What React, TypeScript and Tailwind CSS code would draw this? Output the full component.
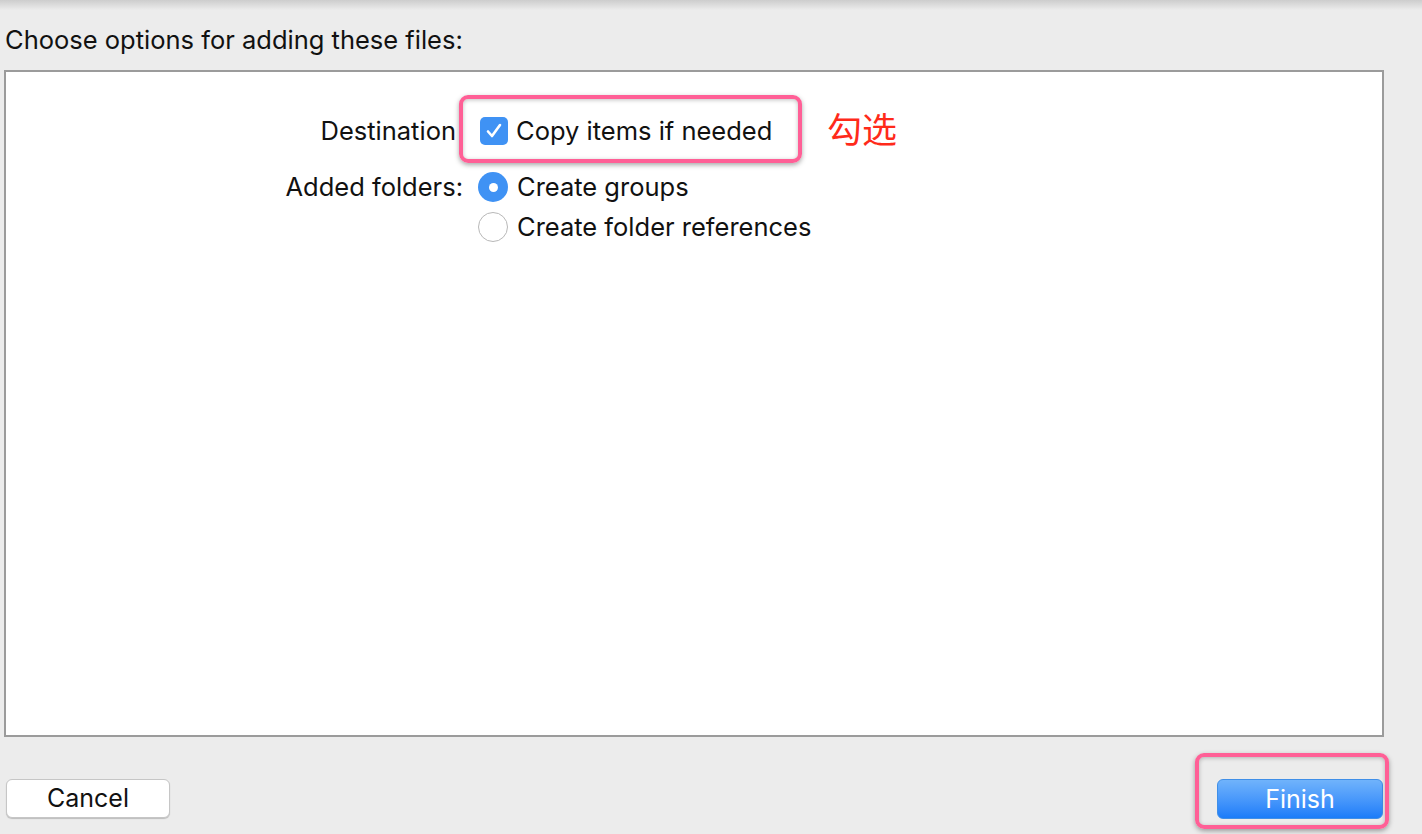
import React from "react";

const font = { fontFamily: "Inter, 'Noto Sans', 'Noto Sans CJK SC', sans-serif" };

function Checkbox() {
  return (
    <div className="w-[28px] h-[28px] rounded-[5px] bg-[#3f92f4] flex items-center justify-center shrink-0">
      <svg width="20" height="20" viewBox="0 0 20 20">
        <path d="M4 10.5 L8 15 L16 4" fill="none" stroke="white" strokeWidth="2.6" strokeLinecap="round" strokeLinejoin="round" />
      </svg>
    </div>
  );
}

function Radio({ on }: { on?: boolean }) {
  return on ? (
    <div className="w-[30px] h-[30px] rounded-full bg-[#3f92f4] flex items-center justify-center shrink-0">
      <div className="w-[9px] h-[9px] rounded-full bg-white" />
    </div>
  ) : (
    <div className="w-[30px] h-[30px] rounded-full bg-white border border-[#b8b8b8] shrink-0" />
  );
}

export default function App() {
  return (
    <div className="w-[1422px] h-[834px] bg-[#ececec] relative overflow-hidden text-[#111]" style={font}>
      <div className="h-[10px] bg-gradient-to-b from-[#cdcdcd] to-[#ececec]" />
      <div className="h-[60px] flex items-center pl-[5px] text-[25.5px] whitespace-nowrap">Choose options for adding these files:</div>
      <div className="ml-[4px] w-[1380px] h-[667px] border-2 border-[#9b9b9b] bg-white">
        <div className="pt-[45px] grid grid-cols-[457px_1fr] gap-x-[15px] text-[25.5px] whitespace-nowrap">
          <div className="h-[28px] flex items-center justify-end pr-[7px]">Destination</div>
          <div className="h-[28px] flex items-center pl-[2px] gap-[8px]">
            <Checkbox />
            <span>Copy items if needed</span>
          </div>
          <div className="h-[30px] mt-[27px] flex items-center justify-end">Added folders:</div>
          <div className="h-[30px] mt-[27px] flex items-center gap-[9px]">
            <Radio on />
            <span>Create groups</span>
          </div>
          <div className="h-[30px] mt-[10px]" />
          <div className="h-[30px] mt-[10px] flex items-center gap-[9px]">
            <Radio />
            <span>Create folder references</span>
          </div>
        </div>
      </div>
      <div className="mt-[42px] flex justify-between pl-[6px] pr-[39px]">
        <button className="w-[164px] h-[39px] pt-[1px] bg-white rounded-[6px] border border-[#c6c6c6] shadow-[0_1px_1px_rgba(0,0,0,0.2)] text-[25px] text-[#111] flex items-center justify-center">
          Cancel
        </button>
        <button className="w-[166px] h-[40px] pt-[1px] rounded-[6px] border border-[#3f8fe8] bg-gradient-to-b from-[#70b3fb] to-[#1a7cf9] text-white text-[25px] flex items-center justify-center">
          Finish
        </button>
      </div>

      <div className="absolute left-[459px] top-[95px] w-[343px] h-[68px] border-[4px] border-[#ff5f96] rounded-[9px] shadow-[0_2px_5px_rgba(0,0,0,0.35),inset_0_1px_4px_rgba(0,0,0,0.25)]" />
      <div className="absolute left-[827px] top-[110px] text-[35px] leading-none text-[#ff2a1a]" style={{ fontFamily: "'Noto Sans CJK SC', sans-serif" }}>勾选</div>
      <div className="absolute left-[1195px] top-[753px] w-[194px] h-[76px] border-[4px] border-[#ff5f96] rounded-[9px] shadow-[0_2px_5px_rgba(0,0,0,0.35),inset_0_1px_4px_rgba(0,0,0,0.25)]" />
    </div>
  );
}
